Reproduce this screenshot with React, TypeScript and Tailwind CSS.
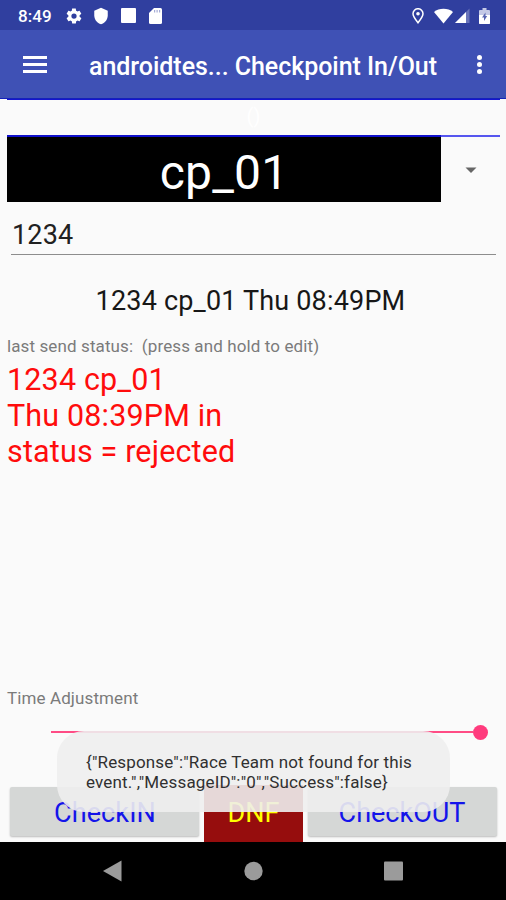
function StatusBar() {
  return (
    <div className="flex h-[30px] items-center bg-[#303f9f] pl-[18px] pr-4 pt-[1px] text-white">
      <span className="w-[35px] whitespace-nowrap pt-[1px] text-[17px] font-medium leading-[29px] tracking-[0.1px]">8:49</span>
      <svg className="ml-[12px]" width="18" height="18" viewBox="0 0 24 24" fill="currentColor">
        <path d="M19.4 13c.1-.3.1-.6.1-1s0-.7-.1-1l2.1-1.600c.2-.2.3-.5.1-.7l-2-3.400c-.1-.2-.4-.3-.6-.2l-2.500 1c-.5-.4-1.100-.7-1.700-1L14.400 2.400c0-.2-.2-.4-.5-.4h-4c-.2 0-.4.2-.5.4L9.100 5.100c-.6.300-1.200.6-1.700 1l-2.500-1c-.2-.1-.5 0-.6.2l-2 3.400c-.1.2-.1.5.1.7L4.500 11a8 8 0 0 0 0 2l-2.100 1.600c-.2.2-.2.5-.1.700l2 3.400c.1.2.4.3.6.2l2.500-1c.5.4 1.100.7 1.700 1l.4 2.700c0 .2.200.4.5.4h4c.2 0 .4-.2.5-.4l.4-2.700c.6-.3 1.200-.6 1.700-1l2.500 1c.2.1.5 0 .6-.2l2-3.400c.1-.2.1-.5-.1-.7zM12 15.500a3.500 3.500 0 1 1 0-7 3.500 3.500 0 0 1 0 7z" />
      </svg>
      <svg className="ml-[9px]" width="18" height="18" viewBox="0 0 24 24" fill="currentColor">
        <path d="M12 1 3 5v6c0 5.500 3.800 10.700 9 12 5.200-1.300 9-6.500 9-12V5z" />
      </svg>
      <span className="ml-[11px] size-[15px] rounded-[1px] bg-white" />
      <svg className="ml-[13px]" width="13" height="16" viewBox="0 0 13 16" fill="currentColor">
        <path d="M5 0h6.500Q13 0 13 1.500v13Q13 16 11.500 16h-10Q0 16 0 14.500V5z" />
        <path d="M5 2h1.200v2.500H5zm2.500 0h1.200v2.500H7.500zM10 2h1.200v2.500H10z" fill="#a5acd6" />
      </svg>
      <svg className="ml-auto" width="12" height="16" viewBox="0 0 12 16" fill="none" stroke="currentColor">
        <path d="M6 14.700C3.300 11.300 1 8.400 1 5.700a5 5 0 0 1 10 0c0 2.700-2.300 5.600-5 9z" strokeWidth="1.500" />
        <circle cx="6" cy="5.700" r="1.800" fill="currentColor" stroke="none" />
      </svg>
      <svg className="ml-[9px]" width="21" height="16" viewBox="0 0 21 16" fill="currentColor">
        <path d="M10.500 15.500 1 4C6-.3 15-.3 20 4z" />
      </svg>
      <svg className="ml-[1px]" width="16" height="15" viewBox="0 0 16 15">
        <path d="M14.500.500V15H0z" fill="#6873b9" />
        <path d="M11 4v11H0z" fill="white" />
      </svg>
      <svg className="ml-[8px]" width="11" height="16" viewBox="0 0 11 16" fill="white">
        <path d="M3.500 0h4v2H10q1 0 1 1v12q0 1-1 1H1q-1 0-1-1V3q0-1 1-1h2.500z" fill="#c4c9e6" />
        <path d="M0 7h11v8q0 1-1 1H1q-1 0-1-1z" />
        <path d="M6.500 4.500 3 9.500H5V13l3.200-5H6.500z" fill="#5966b2" />
      </svg>
    </div>
  );
}

function AppBar() {
  return (
    <header className="flex h-[69px] items-center border-b border-[#1522b9] bg-[#3f51b5] pl-[23px] pr-[24px] text-white">
      <div className="mt-[1px] flex w-6 flex-col gap-[4px]">
        <span className="h-[3px] bg-white" />
        <span className="h-[3px] bg-white" />
        <span className="h-[3px] bg-white" />
      </div>
      <h1 className="ml-[42px] mt-[5px] whitespace-nowrap text-[25px] font-medium leading-[30px] tracking-[-0.04px]">androidtes... Checkpoint In/Out</h1>
      <div className="ml-auto mt-[1px] flex flex-col gap-[2px]">
        <span className="size-[5px] rounded-full bg-white" />
        <span className="size-[5px] rounded-full bg-white" />
        <span className="size-[5px] rounded-full bg-white" />
      </div>
    </header>
  );
}

export default function App() {
  return (
    <div className="relative flex h-[900px] w-[506px] flex-col overflow-hidden bg-[#fafafa] font-['Roboto',sans-serif]">
      <StatusBar />
      <AppBar />
      <main className="flex h-[743px] flex-col">
        <div className="ml-[7px] mr-[6px] flex h-[36px] justify-center border-t border-[#1515d0] pt-[5px] text-[20px] leading-[22px] text-white">()</div>
        <div className="ml-[7px] mr-[6px] h-[2px] bg-[#5656ef]">
          <div className="h-full w-[434px] bg-[#1010cc]" />
        </div>
        <div className="ml-[7px] flex h-[65px]">
          <div className="flex w-[434px] items-center justify-center bg-black pt-[6px] text-[48px] text-white">
            <span className="tracking-[0.2px]">cp_01</span>
          </div>
          <svg className="ml-[24px] mt-[30px]" width="12" height="7" viewBox="0 0 12 7">
            <path d="M.5.500h11L6 6z" fill="#666" />
          </svg>
        </div>
        <div className="ml-[11px] mr-[10px] h-[53px] border-b border-[#8d8d8d] pl-[1px] pt-[18px] text-[27px] leading-[30px] tracking-[0.2px] text-[#212121]">1234</div>
        <div className="pt-[31px] pr-[5px] text-center text-[27px] leading-[30px] tracking-[0.18px] text-[#171717]">1234 cp_01 Thu 08:49PM</div>
        <div className="ml-[7px] mt-[20px] whitespace-pre text-[17px] leading-[20px] tracking-[0.11px] text-[#7b7b7b]">{"last send status:  (press and hold to edit)"}</div>
        <div className="ml-[7px] mt-[6px] text-[30.500px] leading-[36px] tracking-[0.16px] text-[#ff0c0c]">
          <div>1234 cp_01</div>
          <div>Thu 08:39PM in</div>
          <div>status = rejected</div>
        </div>
        <div className="ml-[7px] mt-auto text-[17px] leading-[20px] tracking-[0.11px] text-[#7b7b7b]">Time Adjustment</div>
        <div className="ml-[51px] mt-[17px] flex h-[15px] w-[437px] items-center">
          <div className="mt-[-1px] h-[2px] flex-1 bg-[#ff4c85]" />
          <div className="mt-[-1px] size-[15px] rounded-full bg-[#ff3b7d]" />
        </div>
        <div className="mt-[45px] flex h-[57px] items-start pl-[10px] text-[27px] leading-[30px] text-[#1414ea]">
          <div className="mt-[2px] h-[49px] w-[189px] rounded-[2px] bg-[#d5d7d6] pl-[1px] pt-[11px] text-center tracking-[0.1px] shadow-[0_1px_2px_rgba(0,0,0,0.25)]">CheckIN</div>
          <div className="ml-[5px] h-[57px] w-[99px] bg-[#960d0d] pt-[13px] text-center text-[#ffff00]">DNF</div>
          <div className="ml-[5px] mt-[2px] h-[49px] w-[189px] rounded-[2px] bg-[#d5d7d6] pr-[1px] pt-[11px] text-center shadow-[0_1px_2px_rgba(0,0,0,0.25)]">CheckOUT</div>
        </div>
      </main>
      <nav className="flex h-[58px] items-center bg-black pl-[103px]">
        <svg width="300" height="22" viewBox="0 0 300 22" fill="#9b9b9b">
          <path d="M0 11 18.500.500v21z" />
          <circle cx="150.500" cy="11" r="9.200" />
          <rect x="281" y="1.500" width="19" height="19" rx="1" />
        </svg>
      </nav>
      <div className="absolute left-[57px] top-[731px] h-[81px] w-[393px] rounded-[27px] bg-[#eeeeee]/90 pl-[29px] pt-[21px] text-[17px] leading-[20px] tracking-[0.16px] text-[#303030]">
        <div className="whitespace-nowrap">{'{"Response":"Race Team not found for this'}</div>
        <div className="whitespace-nowrap">{'event.","MessageID":"0","Success":false}'}</div>
      </div>
    </div>
  );
}
